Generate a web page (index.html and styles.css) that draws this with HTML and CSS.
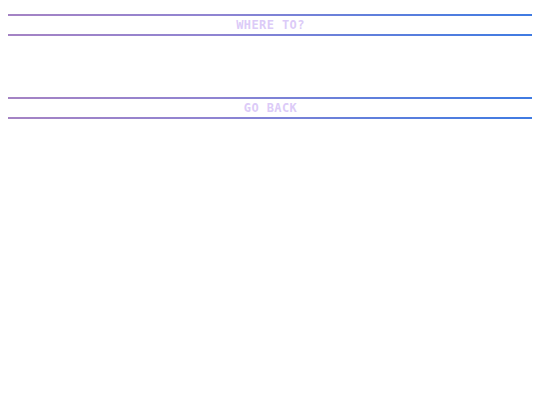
FILE: index.html
```html
<!DOCTYPE html>
<html lang="en">
<head>
<meta charset="utf-8">
<title>Where to?</title>
<link rel="stylesheet" href="styles.css">
</head>
<body>
<main class="menu">
  <div class="bar title">WHERE TO?</div>
  <ul class="destinations"></ul>
  <button class="bar back" type="button">GO BACK</button>
</main>
</body>
</html>
```

FILE: styles.css
```css
html, body {
  margin: 0;
  padding: 0;
  background: #ffffff;
}

.menu {
  display: flex;
  flex-direction: column;
  padding: 14px 8px 0;
}

.bar {
  display: block;
  width: 100%;
  height: 22px;
  box-sizing: border-box;
  margin: 0;
  padding: 1px 0 0 1px;
  border: 0;
  background: transparent;
  border-top: 2px solid;
  border-bottom: 2px solid;
  border-image: linear-gradient(90deg, #a583c4 0%, #8f84d2 40%, #5f7fdc 70%, #3f7be2 100%) 1;
  font-family: "DejaVu Sans Mono", "Liberation Mono", monospace;
  font-weight: bold;
  font-size: 12px;
  line-height: 17px;
  letter-spacing: 0.4px;
  color: #dccbf8;
  text-align: center;
}

.destinations {
  list-style: none;
  margin: 0;
  padding: 0;
  height: 61px;
}

.back {
  cursor: pointer;
}
```
